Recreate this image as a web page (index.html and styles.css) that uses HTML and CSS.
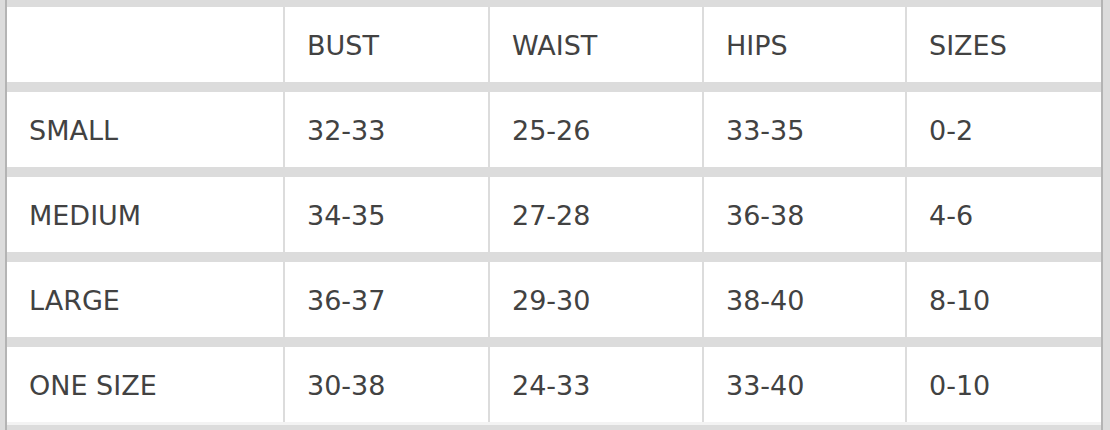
FILE: index.html
```html
<!DOCTYPE html>
<html lang="en">
<head>
<meta charset="utf-8">
<title>Size chart</title>
<link rel="stylesheet" href="styles.css">
</head>
<body>
<div class="frame">
  <div class="chart">
    <div class="cell"></div>
    <div class="cell">BUST</div>
    <div class="cell">WAIST</div>
    <div class="cell">HIPS</div>
    <div class="cell">SIZES</div>

    <div class="cell">SMALL</div>
    <div class="cell">32-33</div>
    <div class="cell">25-26</div>
    <div class="cell">33-35</div>
    <div class="cell">0-2</div>

    <div class="cell">MEDIUM</div>
    <div class="cell">34-35</div>
    <div class="cell">27-28</div>
    <div class="cell">36-38</div>
    <div class="cell">4-6</div>

    <div class="cell">LARGE</div>
    <div class="cell">36-37</div>
    <div class="cell">29-30</div>
    <div class="cell">38-40</div>
    <div class="cell">8-10</div>

    <div class="cell">ONE SIZE</div>
    <div class="cell">30-38</div>
    <div class="cell">24-33</div>
    <div class="cell">33-40</div>
    <div class="cell">0-10</div>
  </div>
  <div class="foot"></div>
</div>
</body>
</html>
```
FILE: styles.css
```css
html, body {
  margin: 0;
  padding: 0;
  background: #dcdcdc;
  height: 100%;
}

.frame {
  margin-left: 5px;
  width: 1094px;
  min-height: 430px;
  border-left: 2px solid #b4b4b4;
  border-right: 2px solid #b4b4b4;
  padding-top: 7px;
  box-sizing: content-box;
  background: #dcdcdc;
}

.chart {
  display: grid;
  grid-template-columns: 276px 203px 212px 201px 194px;
  grid-auto-rows: 75px;
  column-gap: 2px;
  row-gap: 10px;
}

.chart .cell:nth-last-child(-n+5) {
  height: 74px;
}

.cell {
  background: #ffffff;
  display: flex;
  align-items: center;
  padding-left: 22px;
  padding-top: 1px;
  font-family: "DejaVu Sans", Verdana, sans-serif;
  font-size: 27px;
  color: #424242;
}

.foot {
  height: 3px;
  background: #f3f3f3;
}
```
